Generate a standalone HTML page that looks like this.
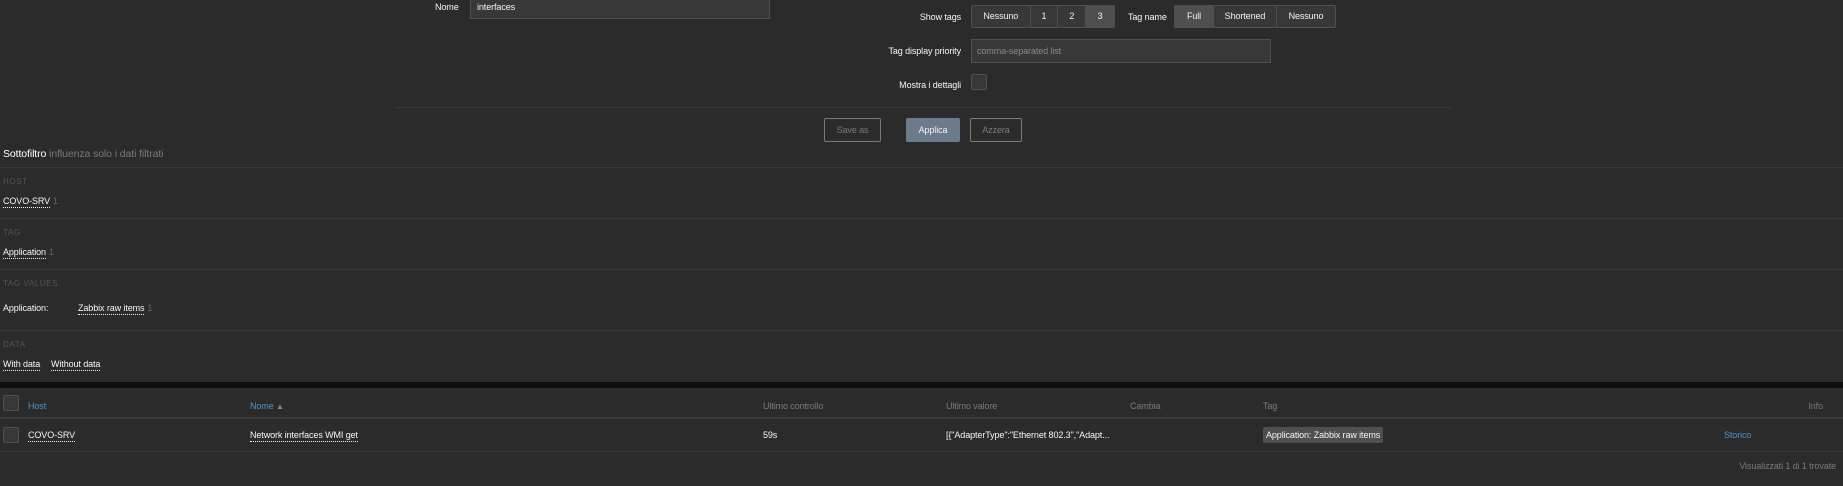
<!DOCTYPE html>
<html><head><meta charset="utf-8"><style>
*{margin:0;padding:0;box-sizing:border-box}
body{width:1843px;height:486px;background:#2b2b2b;font-family:"Liberation Sans",Arial,sans-serif;font-size:9px;letter-spacing:-0.1px;color:#f6f6f6;position:relative;overflow:hidden}
.a{position:absolute;white-space:nowrap}
.lbl{line-height:12px}
.r{text-align:right}
.inp{position:absolute;background:#383838;border:1px solid #4f4f4f}
.grp{position:absolute;display:flex;border:1px solid #4f4f4f;border-radius:2px;background:#383838;height:23px}
.grp div{border-right:1px solid #4f4f4f;line-height:21px;text-align:center;color:#f2f2f2}
.grp div:last-child{border-right:none}
.grp .sel{background:#4f4f4f}
.hl{position:absolute;left:0;width:1843px;height:1px;background:#383838}
.btn{position:absolute;top:118px;height:24px;border:1px solid #7a7a7a;border-radius:2px;color:#7a7a7a;text-align:center;line-height:22px}
.u{border-bottom:1px dotted #f2f2f2;padding-bottom:1px}
.sec{color:#555;font-size:8px;letter-spacing:0.6px}
.cnt{color:#666;margin-left:3px}
.cb{position:absolute;width:16px;height:16px;background:#383838;border:1px solid #4f4f4f;border-radius:2px}
.th{color:#7a7a7a}
.blue{color:#4796c4}
</style></head><body>
<div class="a lbl" style="left:435px;top:1px">Nome</div>
<div class="inp" style="left:470px;top:-2px;width:300px;height:21px"></div>
<div class="a lbl" style="left:477px;top:1px">interfaces</div>

<div class="a lbl r" style="right:882px;top:11px">Show tags</div>
<div class="grp" style="left:971px;top:5px;width:144px">
<div style="width:59px">Nessuno</div><div style="width:28px">1</div><div style="width:28px">2</div><div class="sel" style="width:28px">3</div></div>
<div class="a lbl" style="left:1128px;top:11px">Tag name</div>
<div class="grp" style="left:1174px;top:5px;width:162px">
<div class="sel" style="width:39px">Full</div><div style="width:63px">Shortened</div><div style="width:58px">Nessuno</div></div>

<div class="a lbl r" style="right:882px;top:45px">Tag display priority</div>
<div class="inp" style="left:971px;top:39px;width:300px;height:24px"></div>
<div class="a lbl" style="left:977px;top:45px;color:#8a8a8a">comma-separated list</div>

<div class="a lbl r" style="right:882px;top:79px">Mostra i dettagli</div>
<div class="cb" style="left:971px;top:74px"></div>

<div style="position:absolute;left:395px;top:107px;width:1056px;height:1px;background:#383838"></div>
<div class="btn" style="left:824px;width:57px">Save as</div>
<div class="btn" style="left:906px;width:54px;background:#6c7b8b;border-color:#6c7b8b;color:#f2f2f2">Applica</div>
<div class="btn" style="left:970px;width:52px">Azzera</div>

<div class="a" style="left:3px;top:148px;font-size:10.5px;line-height:12px"><b style="font-weight:normal;color:#fff">Sottofiltro</b> <span style="color:#7a7a7a">influenza solo i dati filtrati</span></div>
<div class="hl" style="top:167px"></div>
<div class="a sec" style="left:3px;top:177px">HOST</div>
<div class="a lbl" style="left:3px;top:195px"><span class="u">COVO-SRV</span><span class="cnt">1</span></div>
<div class="hl" style="top:218px"></div>
<div class="a sec" style="left:3px;top:228px">TAG</div>
<div class="a lbl" style="left:3px;top:246px"><span class="u">Application</span><span class="cnt">1</span></div>
<div class="hl" style="top:269px"></div>
<div class="a sec" style="left:3px;top:279px">TAG VALUES</div>
<div class="a lbl" style="left:3px;top:302px">Application:</div>
<div class="a lbl" style="left:78px;top:302px"><span class="u">Zabbix raw items</span><span class="cnt">1</span></div>
<div class="hl" style="top:330px"></div>
<div class="a sec" style="left:3px;top:340px">DATA</div>
<div class="a lbl" style="left:3px;top:358px"><span class="u">With data</span></div>
<div class="a lbl" style="left:51px;top:358px"><span class="u">Without data</span></div>

<div style="position:absolute;left:0;top:382px;width:1843px;height:6px;background:#0e0e0e"></div>
<div class="cb" style="left:3px;top:395px"></div>
<div class="a lbl blue" style="left:28px;top:400px">Host</div>
<div class="a lbl blue" style="left:250px;top:400px">Nome <span style="color:#888;font-size:8px">▲</span></div>
<div class="a lbl th" style="left:763px;top:400px">Ultimo controllo</div>
<div class="a lbl th" style="left:946px;top:400px">Ultimo valore</div>
<div class="a lbl th" style="left:1130px;top:400px">Cambia</div>
<div class="a lbl th" style="left:1263px;top:400px">Tag</div>
<div class="a lbl th r" style="right:20px;top:400px">Info</div>
<div style="position:absolute;left:0;top:417px;width:1843px;height:2px;background:#383838"></div>

<div class="cb" style="left:3px;top:427px"></div>
<div class="a lbl" style="left:28px;top:429px"><span class="u">COVO-SRV</span></div>
<div class="a lbl" style="left:250px;top:429px"><span class="u">Network interfaces WMI get</span></div>
<div class="a lbl" style="left:763px;top:429px">59s</div>
<div class="a lbl" style="left:946px;top:429px">[{"AdapterType":"Ethernet 802.3","Adapt...</div>
<div class="a lbl" style="left:1263px;top:427px;background:#4f4f4f;padding:2px 3px;border-radius:2px;line-height:12px">Application: Zabbix raw items</div>
<div class="a lbl blue" style="left:1724px;top:429px">Storico</div>
<div class="hl" style="top:451px"></div>
<div class="a lbl th r" style="right:7px;top:460px">Visualizzati 1 di 1 trovate</div>
</body></html>
